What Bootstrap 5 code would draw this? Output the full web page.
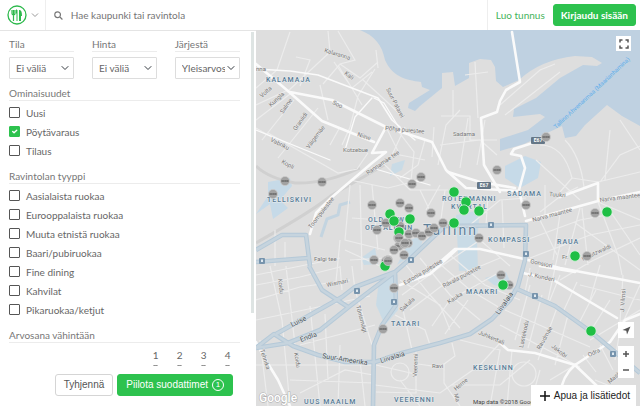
<!DOCTYPE html>
<html lang="fi">
<head>
<meta charset="utf-8">
<meta name="viewport" content="width=device-width, initial-scale=1">
<title>Ravintolat – Tallinn</title>
<link href="https://cdn.jsdelivr.net/npm/bootstrap@5.3.0/dist/css/bootstrap.min.css" rel="stylesheet">
<style>
:root{--brand:#2dc24e;--ink:#666;--rule:#e4e4e4}
body{font-family:Lato,"Open Sans",sans-serif;font-size:10px;line-height:14px;color:var(--ink);background:#fff}
.topbar{height:30px}
.brand-menu{width:46px;border-right:1px solid #eee!important;padding-left:7px!important}
.search-field{font-size:10px;line-height:14px;color:var(--ink)}
.search-field::placeholder{color:#757575;opacity:1}
.account{border-left:1px solid #eee}
.signup{color:#45b35c;font-size:10px}
.btn-brand,.btn-brand:hover{background:var(--brand);color:#fff;border-color:var(--brand)}
.btn-small{font-size:10px;line-height:14px;padding:3px 7px;border-radius:3px}
.btn-plain{border:1px solid #d5d5d5;color:#555;background:#fff}
.btn-foot{font-family:"Liberation Sans",Arial,sans-serif}
.filters{width:40%;max-width:300px;border-top:1px solid var(--rule)}
.filter-body{padding:6px 11px 0 9px}
.rail{width:4px;margin:1px 2px 0 0}
.thumb{height:84%;background:#dee4e3}
.group-title{font-size:10px;line-height:14px;color:#777;border-bottom:1px solid #ececec;margin:0 0 2px;font-weight:400;float:none;width:100%;padding:0}
.group-box{margin-bottom:9px;min-width:0}
.pickers{display:grid;grid-template-columns:repeat(3,1fr);column-gap:18px;margin-bottom:7px}
.pickers .group-title{margin-bottom:5px;display:block}
.picker{height:22px;font-size:10px;line-height:14px;padding:3px 14px 3px 6px;border:1px solid #ddd;border-radius:1px;color:var(--ink);background-size:8px 8px;background-position:right 4px center;text-overflow:clip}
.tick-row{height:19px;gap:6px}
.tick{width:11px;height:11px;border:1px solid #555;border-radius:1px!important;margin:0;flex:none;float:none}
.tick:checked{background-color:var(--brand);border-color:var(--brand)}
.scores{display:grid;grid-template-columns:repeat(4,24px);justify-content:end;padding-top:2px}
.score{display:flex;flex-direction:column;align-items:center;gap:2px;line-height:16px}
.score input{width:11px;height:11px;margin:0;border-color:#777}
.filter-foot{padding:8px 23px 10px 9px;gap:4px}
.count{width:12px;height:12px;border:1px solid #fff;font-size:8px;line-height:10px}
.map-pane{background:#dedede;min-width:0}
.map-art{position:absolute;inset:0;width:100%;height:100%}
.map-btn{background:#fff;border:0;padding:0;width:16px;height:16px;color:#555}
.fs{position:absolute;top:6px;right:9px;width:15px;height:15px}
.side-tools{position:absolute;right:6px;bottom:28px;gap:8px}
.help{position:absolute;right:4px;bottom:0;height:21px;background:#fff;border:0;color:#222;font:10px/20px "Liberation Sans",Arial,sans-serif;padding:0 6px 0 9px}
svg text{font-family:Roboto,"Liberation Sans",sans-serif}
.district{font-size:7px;font-weight:500;letter-spacing:1px;fill:#587b95;stroke:#e8edf0;stroke-width:1px;paint-order:stroke}
.street{font-size:6px;fill:#777;stroke:#e9e9e9;stroke-width:1px;paint-order:stroke}
.avenue{font-size:7px;fill:#4c5358;stroke:#dfe5e9;stroke-width:1px;paint-order:stroke}
</style>
<script src="https://cdn.jsdelivr.net/npm/bootstrap@5.3.0/dist/js/bootstrap.bundle.min.js"></script>
</head>
<body class="d-flex flex-column vh-100 overflow-hidden">
<header class="topbar d-flex align-items-stretch flex-shrink-0">
  <button class="brand-menu btn p-0 border-0 rounded-0 d-flex align-items-center gap-1" aria-label="Valikko">
    <svg width="20" height="20" viewBox="0 0 20 20" fill="none" stroke="#2db94c"><circle cx="10" cy="10" r="9" stroke-width="1.3"/><path d="M5 5v3.500q0 1.500 1.500 1.500T8 8.500V5M6.500 5v11" stroke-width="1.200"/><path d="M9.500 4.500v4M10 16V5" stroke-width="1"/><path d="M12 16V5q3-1 3 6h-1v5z" fill="#2db94c" stroke="none"/></svg>
    <svg width="8" height="6" viewBox="0 0 8 6" fill="none" stroke="#999"><path d="M1 1.500l3 3 3-3"/></svg>
  </button>
  <form class="d-flex align-items-center flex-grow-1 ps-2" role="search">
    <svg width="9" height="9" viewBox="0 0 9 9" fill="none" stroke="#777" stroke-width="1.200"><circle cx="3.700" cy="3.700" r="2.900"/><path d="M6 6l2.600 2.600"/></svg>
    <input class="search-field form-control border-0 shadow-none py-0 px-2" type="text" placeholder="Hae kaupunki tai ravintola" aria-label="Hae kaupunki tai ravintola">
  </form>
  <div class="account d-flex align-items-center ps-2 pe-1 gap-2">
    <a class="signup text-decoration-none text-nowrap" href="#">Luo tunnus</a>
    <button class="btn btn-brand btn-small fw-bold text-nowrap">Kirjaudu sisään</button>
  </div>
</header>
<main class="d-flex flex-grow-1 overflow-hidden">
  <aside class="filters d-flex flex-column flex-shrink-0">
    <div class="d-flex flex-grow-1 overflow-hidden">
      <div class="filter-body flex-grow-1 overflow-hidden">
        <div class="pickers">
          <div><label class="group-title" for="tila">Tila</label><select id="tila" class="picker form-select"><option>Ei väliä</option></select></div>
          <div><label class="group-title" for="hinta">Hinta</label><select id="hinta" class="picker form-select"><option>Ei väliä</option></select></div>
          <div><label class="group-title" for="jarj">Järjestä</label><select id="jarj" class="picker form-select"><option>Yleisarvosana</option></select></div>
        </div>
        <fieldset class="group-box"><legend class="group-title">Ominaisuudet</legend>
          <label class="tick-row d-flex align-items-center"><input class="tick form-check-input" type="checkbox">Uusi</label>
          <label class="tick-row d-flex align-items-center"><input class="tick form-check-input" type="checkbox" checked>Pöytävaraus</label>
          <label class="tick-row d-flex align-items-center"><input class="tick form-check-input" type="checkbox">Tilaus</label>
        </fieldset>
        <fieldset class="group-box"><legend class="group-title">Ravintolan tyyppi</legend>
          <label class="tick-row d-flex align-items-center"><input class="tick form-check-input" type="checkbox">Aasialaista ruokaa</label>
          <label class="tick-row d-flex align-items-center"><input class="tick form-check-input" type="checkbox">Eurooppalaista ruokaa</label>
          <label class="tick-row d-flex align-items-center"><input class="tick form-check-input" type="checkbox">Muuta etnistä ruokaa</label>
          <label class="tick-row d-flex align-items-center"><input class="tick form-check-input" type="checkbox">Baari/pubiruokaa</label>
          <label class="tick-row d-flex align-items-center"><input class="tick form-check-input" type="checkbox">Fine dining</label>
          <label class="tick-row d-flex align-items-center"><input class="tick form-check-input" type="checkbox">Kahvilat</label>
          <label class="tick-row d-flex align-items-center"><input class="tick form-check-input" type="checkbox">Pikaruokaa/ketjut</label>
        </fieldset>
        <fieldset class="group-box"><legend class="group-title">Arvosana vähintään</legend>
          <div class="scores">
            <label class="score">1<input class="form-check-input" type="radio" name="score"></label>
            <label class="score">2<input class="form-check-input" type="radio" name="score"></label>
            <label class="score">3<input class="form-check-input" type="radio" name="score"></label>
            <label class="score">4<input class="form-check-input" type="radio" name="score"></label>
          </div>
        </fieldset>
      </div>
      <div class="rail"><div class="thumb"></div></div>
    </div>
    <div class="filter-foot d-flex justify-content-end">
      <button class="btn btn-plain btn-small btn-foot px-2">Tyhjennä</button>
      <button class="btn btn-brand btn-small btn-foot px-2 d-flex align-items-center gap-1 text-nowrap">Piilota suodattimet <span class="count rounded-circle">1</span></button>
    </div>
  </aside>
  <section class="map-pane position-relative flex-grow-1 overflow-hidden" aria-label="Kartta">
    <svg class="map-art" viewBox="256 30 384 376" preserveAspectRatio="xMinYMin slice">
      <defs>
        <g id="go"><circle r="5.200" fill="#1fbf45" stroke="#d9f2df" stroke-width=".8"/></g>
        <g id="off"><circle r="4.600" fill="#a2a2a2" stroke="#ccc" stroke-width=".7"/><path d="M-3.500 0h7" stroke="#707070" stroke-width="2"/><path d="M-2.500 0h5" stroke="#aaa" stroke-width=".6" stroke-dasharray="1 .6"/></g>
        <g id="tram"><rect x="-3" y="-3" width="6" height="6" rx="1" fill="#7794ad"/><path d="M-1-1.500h2v2.500h-2z" fill="#dfe9f0"/></g>
      </defs>
      <rect x="256" y="30" width="384" height="376" fill="#dedede"/>
      <!-- sea, harbour and piers -->
      <path fill="#bfd1e1" d="M360 30C375 36 382 45 385 60C392 76 405 80 421 82L422 87L430 90L409 103L408 108L415 111L420 106L442 88L442 73L453 72L455 86L469 78L469 63L480 59L491 60L495 67L496 81L503 87L519 80Q540 60 575 56L592 57L602 63L597 66L583 65L560 78L536 98L514 109L513 117L540 114L545 117L528 130L500 139L500 151L524 144L545 134L562 126L565 138L576 136L585 125L607 105L622 116L640 126V30z"/>
      <g fill="#c6dae8">
        <path d="M505 166L525 156L541 162L538 178L520 188L505 178zM268 182L290 178L292 186L280 200L288 208L273 219L270 204L256 214L268 196z"/>
        <path d="M456 215L480 210L477 240L478 270L459 271zM379 280L397 275L398 310L385 325L376 305zM392 164L405 160L402 170L390 176zM361 258L375 248L378 264L364 265zM397 265L410 240L424 235L420 250zM485 278L506 272L514 290L494 285z" opacity=".85"/>
      </g>
      <path d="M321 237L327 219L338 215L340 205L350 202" fill="none" stroke="#c3d4e0" stroke-width="3"/>
      <!-- railway -->
      <path d="M256 243C285 226 310 213 332 195L386 164M256 166Q268 178 295 183Q325 184 360 168" fill="none" stroke="#d0d0d0" stroke-width="3"/>
      <!-- local streets -->
      <g fill="none" stroke="#ececec" stroke-width="1.200">
        <path d="M256 105L288 90M256 120L290 94M262 140L294 100M278 158L318 108M268 133L324 165L338 173L357 169L368 153M256 128L290 148M287 92L330 52L328 31M256 88L277 70L290 32M323 84L340 64L355 60L338 31M340 64L360 78L378 62M320 85L328 120M334 62L352 88L372 72M350 127L358 96L375 69M362 79L385 100L402 116M338 65L362 105M300 86L310 60L296 57M376 50L378 68M342 145L351 125M330 145L340 127M395 127L414 152L410 190M386 127L400 155L425 160M405 127L392 155M425 140L418 165L400 178M434 127L432 157M384 164L410 190L448 190M350 180L388 188L420 180M420 190L432 215M440 185L426 210M350 185L345 240L385 250M350 260L386 258L396 250M352 218L380 220L398 232M340 240L336 282M372 185L378 250M360 185L362 270"/>
        <path d="M460 110L446 125L438 165M441 116H470V140H497M453 90V116M475 62L478 118M465 75L488 72M440 145L480 140L497 155M468 118L460 168M485 120L477 165M500 105L540 70L555 64M505 115L560 72M540 145Q564 145 572 178L560 192M565 140Q580 155 584 187M600 182L620 155L640 146M610 130L605 180M620 120L640 150M572 178L598 182L640 172M578 187L562 195L540 212M598 202L618 255L622 275M598 202L640 220M582 208L588 265M580 208L565 265M560 214L553 260M540 220L557 255M526 240L580 220L612 214M530 258L590 235L640 225M640 238L590 262L560 280M608 208L640 255M574 222L640 270"/>
        <path d="M256 300L300 287L350 280M256 285L300 277L340 267M256 320L285 314L370 296M270 266L282 320L290 406M286 266L295 345M310 306L320 406M325 314L328 380M352 266L355 290L372 345M340 266L342 290M300 345L375 325M256 365L372 365M290 380L373 383M300 393L345 370L373 375M340 345L338 406M360 360L365 406M260 340L268 406M275 230V266M256 275L340 258M345 250L380 266M285 242V258M400 280L440 305L450 330M406 265L430 295L460 328M420 258L450 295L480 320M440 264L470 290L500 308M450 255L485 285L520 300M402 295L440 267L480 240M410 310L452 278L500 258M432 326L450 300L500 272M445 334L468 300M395 315L425 330L430 345M403 310L412 350M452 343L455 356L440 367L418 364M416 350V393L376 392M444 363V383L460 406M376 365L415 374M375 385L440 393L480 365L500 343M400 380L420 406M452 385L500 385L530 360M460 340L500 350L490 406M530 285L515 340M542 295L528 348M558 305L538 360M568 315L555 365M505 310L590 347M500 325L580 367M530 268L525 292M560 275L548 305M577 282L563 312M596 290L578 325M610 300L590 332M623 275L620 322M640 285L624 320M600 345L613 370M583 355L596 372M540 370L530 406M512 350L507 406M550 380L575 365M560 245L548 300M590 340L640 310M580 285L640 300M600 265L590 300M620 330L615 360M595 380L620 390M480 240L510 266M470 225L500 200L526 198M488 196L486 225M445 190L440 226M502 200L504 248M536 160L580 200M545 185L545 215"/>
        <circle cx="400" cy="372" r="9"/><circle cx="524" cy="374" r="12"/>
      </g>
      <!-- main streets -->
      <g fill="none" stroke="#fafafa" stroke-width="2.600" stroke-linejoin="round" stroke-linecap="round">
        <path d="M256 64L288 91L322 121L374 142M290 92L332 100L386 127L432 142L446 170L466 188L519 191M372 153L386 127M310 234L316 213L332 197L372 163L386 152L372 153M440 262L455 249L480 249L520 258L560 268L640 283M256 342L264 357L278 380L290 406"/>
        <path d="M512 32L520 82L506 90L500 101L497 112L481 118L484 165L500 192"/>
        <path d="M545 139L514 149L511 154L521 156L525 168L519 190L525 216M526 221L598 201L640 192M598 201V183L560 197"/>
        <path d="M448 172L480 182L515 188M456 250L430 274L400 285M523 273L555 281L617 318M500 343L508 350L535 353L575 365L610 342L625 320L640 314M575 365Q562 376 560 395M575 365L597 386M540 266L575 272"/>
        <path d="M256 69L290 71L318 75L378 98L392 120L400 127" stroke-width="1.600"/>
        <path d="M374 98L384 103L398 126L415 140M372 98L355 117L345 150M256 130L330 160M372 168L430 185" stroke-width="1.300"/>
      </g>
      <!-- tram avenues -->
      <g fill="none" stroke-linejoin="round">
        <path stroke="#b5c9d8" stroke-width="4.600" d="M256 348L274 334L293 346L318 355L345 362L375 362L402 353L440 343L470 334L492 319L510 300L518 286L525 260L526 225L445 226L430 240L410 259L395 272L350 306L320 330L288 343L256 348M276 334L342 297L355 287L395 272M309 266L322 290L348 307M256 250L282 235H306L310 266M256 262L308 258M373 406L374 345L382 325L396 305L395 272M517 289L555 306L590 331L640 373"/>
        <path stroke="#c6d4de" stroke-width="2.600" d="M256 348L274 334L293 346L318 355L345 362L375 362L402 353L440 343L470 334L492 319L510 300L518 286L525 260L526 225L445 226L430 240L410 259L395 272L350 306L320 330L288 343L256 348M276 334L342 297L355 287L395 272M309 266L322 290L348 307M256 250L282 235H306L310 266M256 262L308 258M373 406L374 345L382 325L396 305L395 272M517 289L555 306L590 331L640 373"/>
      </g>
      <use href="#tram" x="262" y="261"/><use href="#tram" x="357" y="291"/><use href="#tram" x="394" y="302"/><use href="#tram" x="411" y="260"/><use href="#tram" x="491" y="225"/><use href="#tram" x="526" y="254"/><use href="#tram" x="535" y="296"/><use href="#tram" x="613" y="354"/>
      <!-- street names -->
      <g class="street">
        <text transform="translate(324 52) rotate(17)">Kalaranna</text><text transform="translate(344 74) rotate(38)">Kali</text><text transform="translate(386 89) rotate(63)">Suur-Patarei</text><text transform="translate(332 104) rotate(25)">Soo</text><text transform="translate(385 130) rotate(5)">Põhja puiestee</text><text transform="translate(262 98) rotate(-42)">Volta</text><text transform="translate(271 107) rotate(-42)">Kungla</text><text transform="translate(283 114) rotate(-55)">Salme</text><text transform="translate(296 131) rotate(-55)">Graniidi</text><text transform="translate(270 141) rotate(27)">Vabriku</text><text transform="translate(309 149) rotate(-53)">Väigemäe</text><text transform="translate(357 136) rotate(18)">Niine</text><text x="343" y="152">Kotzebue</text><text transform="translate(281 163) rotate(28)">Kopli</text><text transform="translate(368 175) rotate(-34)">Rannamäe tee</text><text transform="translate(311 229) rotate(-52)">Toompuiestee</text><text x="314" y="261">Falgi tee</text><text transform="translate(278 279) rotate(83)">Koidu</text><text transform="translate(327 287) rotate(-12)">Wismari</text><text transform="translate(356 306) rotate(75)">Tõnismägi</text><text transform="translate(260 350) rotate(72)">Tehnika</text><text transform="translate(294 353) rotate(80)">Koidu</text><text transform="translate(549 196) rotate(5)">Tuukri</text><text transform="translate(533 222) rotate(-15)">Narva maantee</text><text transform="translate(600 202) rotate(-7)">Narva maantee</text><text transform="translate(530 263) rotate(12)">Gonsiori</text><text transform="translate(562 259)">Fr.</text><text transform="translate(583 261) rotate(-25)">Kreutzwaldi</text><text transform="translate(528 276) rotate(12)">J. Kunderi</text><text transform="translate(405 285) rotate(-31)">Estonia puiestee</text><text transform="translate(444 288) rotate(-28)">Rävala puiestee</text><text transform="translate(402 312) rotate(-43)">Sakala</text><text transform="translate(449 304) rotate(-33)">Kauka</text><text transform="translate(478 334) rotate(23)">Juhkentali</text><text x="432" y="368">Ravi</text><text transform="translate(417 377) rotate(-88)">Veerenni</text><text transform="translate(456 391) rotate(-40)">Herne</text><text transform="translate(454 394) rotate(75)">Ma</text><text transform="translate(523 348) rotate(-78)">Lastekodu</text><text transform="translate(540 350) rotate(-60)">Raudmäe</text><text transform="translate(551 347) rotate(38)">Jakobi</text><text transform="translate(589 357) rotate(-25)">Odra</text><text transform="translate(610 384) rotate(-43)">Masina</text><text transform="translate(624 312) rotate(-86)">J. Vilmsi</text><text x="453" y="136">Sadama</text><text x="256" y="71">nna</text>
      </g>
      <g class="avenue"><text transform="translate(292 327) rotate(-25)">Luise</text><text transform="translate(301 342) rotate(-20)">Endla</text><text transform="translate(322 358) rotate(9)">Suur-Ameerika</text><text transform="translate(381 363) rotate(-17)">Liivalaia</text><text transform="translate(499 315) rotate(-55)">Liivalaia</text></g>
      <text transform="translate(556 129) rotate(-43)" font-size="6" fill="#64b0ea">Tallinn-Ahvenanmaa (Maarianhamina)</text>
      <text x="423" y="235" font-size="14" letter-spacing="2" fill="#5f8099" stroke="#e8edf0" stroke-width="1" paint-order="stroke">Tallinn</text>
      <!-- districts -->
      <g class="district"><text x="266" y="82">KALAMAJA</text><text x="267" y="202">TELLISKIVI</text><text x="368" y="222">OLD TOWN</text><text x="365" y="230">OF TALLINN</text><text x="442" y="201">ROTERMANNI</text><text x="451" y="209">KVARTAL</text><text x="507" y="196">SADAMA</text><text x="488" y="242">KOMPASSI</text><text x="557" y="244">RAUA</text><text x="466" y="294">MAAKRI</text><text x="391" y="326">TATARI</text><text x="473" y="370">KESKLINN</text><text x="394" y="402">VEERENNI</text><text x="304" y="404">UUS MAAILM</text></g>
      <g fill="#657787"><rect x="477" y="182" width="14" height="7" rx="1"/><rect x="531" y="137" width="14" height="7" rx="1"/></g>
      <g font-size="5" font-weight="700" fill="#fff" text-anchor="middle"><text x="484" y="187">E67</text><text x="538" y="142">E67</text></g>
      <!-- venues -->
      <g id="venues"></g>
      <text x="259" y="402" font-size="12" font-weight="500" fill="#fff" stroke="#aaa" stroke-width="1" paint-order="stroke">Google</text>
      <text x="473" y="404" font-size="6" fill="#444">Map data ©2018 Google</text>
    </svg>
    <button class="map-btn fs d-flex align-items-center justify-content-center" aria-label="Koko näyttö"><svg width="10" height="10" viewBox="0 0 10 10" fill="none" stroke="#555" stroke-width="1.500"><path d="M1 3.500V1h2.500M6.500 1H9v2.500M9 6.500V9H6.500M3.500 9H1V6.500"/></svg></button>
    <div class="side-tools d-flex flex-column">
      <button class="map-btn d-flex align-items-center justify-content-center" aria-label="Oma sijainti"><svg width="9" height="9" viewBox="0 0 9 9"><path d="M8.500.5L5 8.500 4.300 4.700.5 4z" fill="#555"/></svg></button>
      <div class="d-flex flex-column bg-white">
        <button class="map-btn d-flex align-items-center justify-content-center" aria-label="Lähennä"><svg width="8" height="8" viewBox="0 0 8 8"><path d="M1 4h6M4 1v6" stroke="#555" stroke-width="1.500"/></svg></button>
        <button class="map-btn d-flex align-items-center justify-content-center" aria-label="Loitonna"><svg width="8" height="8" viewBox="0 0 8 8"><path d="M1 4h6" stroke="#555" stroke-width="1.500"/></svg></button>
      </div>
    </div>
    <button class="help d-flex align-items-center gap-1 text-nowrap"><svg width="10" height="10" viewBox="0 0 10 10"><path d="M0 5h10M5 0v10" stroke="#111" stroke-width="1.500"/></svg>Apua ja lisätiedot</button>
  </section>
</main>
<script>
const closed=[[285,181],[322,182],[273,194],[372,205],[377,230],[374,260],[412,184],[421,177],[400,203],[409,208],[431,213],[386,223],[400,226],[409,234],[416,233],[422,236],[429,232],[434,228],[443,223],[398,238],[399,246],[408,243],[404,244],[394,250],[404,255],[386,261],[388,260],[479,238],[501,275],[394,288],[383,329],[497,170],[546,137],[526,205],[595,213],[587,256],[509,285]];
const open=[[390,214],[394,221],[410,219],[399,232],[454,192],[466,202],[464,210],[479,211],[454,223],[385,266],[607,212],[575,256],[503,285],[591,331]];
const front=[[399,238],[405,243],[388,261]];
const pin=(kind,[x,y])=>`<use href="#${kind}" x="${x}" y="${y}"/>`;
document.getElementById('venues').innerHTML=closed.map(p=>pin('off',p)).join('')+open.map(p=>pin('go',p)).join('')+front.map(p=>pin('off',p)).join('');
</script>
</body>
</html>
